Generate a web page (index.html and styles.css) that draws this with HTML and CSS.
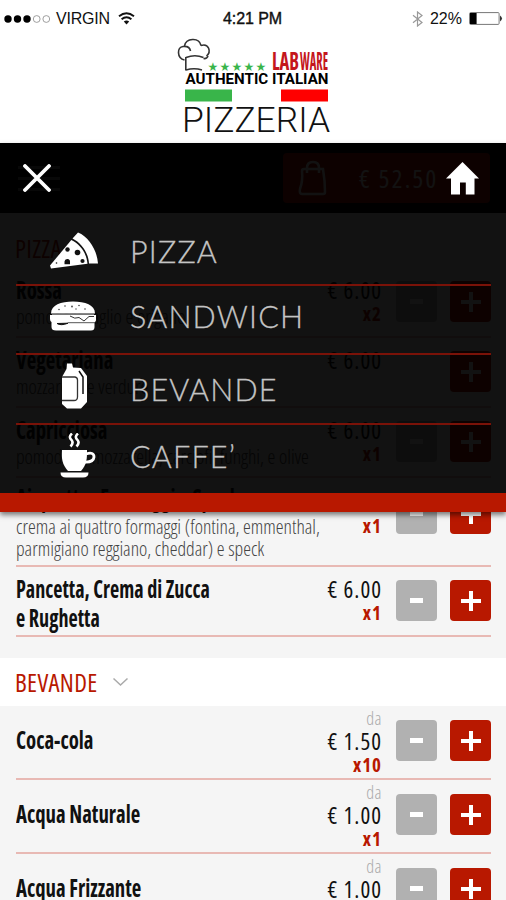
FILE: index.html
```html
<!DOCTYPE html>
<html lang="it">
<head>
    <meta charset="UTF-8">
    <meta name="viewport" content="width=device-width, initial-scale=1.0">
    <title>Labware Pizzeria</title>
    <link rel="stylesheet" href="styles.css">
</head>
<body>
    <div class="app">
        <div class="statusbar">
            <div class="status-left">
                <svg width="46" height="10" viewBox="0 0 46 10">
                    <circle cx="4" cy="5" r="3.7"/>
                    <circle cx="13.5" cy="5" r="3.7"/>
                    <circle cx="23" cy="5" r="3.7"/>
                    <circle cx="32.7" cy="5" r="3.4" fill="none" stroke="#888" stroke-width=".8"/>
                    <circle cx="42.3" cy="5" r="3.4" fill="none" stroke="#888" stroke-width=".8"/>
                </svg>
                <span class="carrier">VIRGIN</span>
                <svg width="17" height="13" viewBox="0 0 17 13" fill="none" stroke="#111" stroke-width="1.9">
                    <path d="M1 4.2Q8.5 -1.8 16 4.2M3.6 7.3Q8.5 3.2 13.4 7.3"/>
                    <path d="M5.8 9.6Q8.5 7.2 11.2 9.6L8.5 12.6Z" fill="#111" stroke="none"/>
                </svg>
            </div>
            <div class="status-time">4:21 PM</div>
            <div class="status-right">
                <svg width="11" height="16" viewBox="0 0 11 16" fill="none" stroke="#999" stroke-width="1.2">
                    <path d="M1 4.3L10 11.5L5.5 15V1L10 4.5L1 11.7"/>
                </svg>
                <span class="percent">22%</span>
                <svg width="34" height="13" viewBox="0 0 34 13">
                    <rect x=".6" y=".6" width="29.5" height="11.8" rx="1" fill="none" stroke="#777"/>
                    <rect x="1" y="1" width="6.6" height="11"/>
                    <path d="M31 3.6Q35 6.5 31 9.4Z" fill="#333"/>
                </svg>
            </div>
        </div>

        <header class="brand">
            <svg width="160" height="100" viewBox="173 37 160 100">
                <g fill="none" stroke="#333" stroke-width="1.6">
                    <path d="M184.500 60C176.500 58 177 47 183 46.500C188 46 190 48 190.500 51M184.500 46C186 38 199 37 201 45.500M201 45.500C209 43 211.500 52 206.500 56M203.500 58.500Q207 59 208 56"/>
                    <path d="M185.800 57V70.500M186 57.500Q195 54 203.500 57.500M186 70Q194 67.500 202 70"/>
                </g>
                <g class="stars">
                    <text x="207.500" y="71">★</text>
                    <text x="219.500" y="71">★</text>
                    <text x="231.500" y="71">★</text>
                    <text x="243.500" y="71">★</text>
                    <text x="255.500" y="71">★</text>
                </g>
                <text class="lab" x="272" y="69.500" textLength="27" lengthAdjust="spacingAndGlyphs">LAB</text>
                <text class="ware" x="300" y="69.500" textLength="28" lengthAdjust="spacingAndGlyphs">WARE</text>
                <text class="authentic" x="185.500" y="84" textLength="143" lengthAdjust="spacingAndGlyphs">AUTHENTIC ITALIAN</text>
                <rect x="185" y="89.500" width="47" height="12" fill="#39b54a"/>
                <rect x="281" y="89.500" width="47" height="12" fill="#f00"/>
                <text class="pizzeria" x="182" y="131.500" textLength="148" lengthAdjust="spacingAndGlyphs">PIZZERIA</text>
            </svg>
        </header>

        <div class="topbar">
            <div class="burger"><i></i><i></i><i></i></div>
            <div class="cart">
                <svg width="30" height="36" viewBox="0 0 30 36" fill="none" stroke="#fff" stroke-width="2.500">
                    <path d="M6 9H25Q27 21 27 32Q27 34 25 34H4Q1 34 2 29Q5 21 4 11Q4 9 6 9Z"/>
                    <path d="M9 13V8Q9 2 15 2Q21 2 21 8V13"/>
                </svg>
                <span class="total">€ 52.50</span>
            </div>
        </div>

        <main class="list">
            <h2 class="section section-first">PIZZA</h2>
            <div class="row">
                <div class="info"><p class="name">Rossa</p><p class="desc">pomodoro, aglio e origano</p></div>
                <div class="price"><span>€ 6.00</span><b>x2</b></div>
                <button class="btn minus"></button><button class="btn plus"></button>
            </div>
            <div class="row">
                <div class="info"><p class="name">Vegetariana</p><p class="desc">mozzarella e verdure</p></div>
                <div class="price"><span>€ 6.00</span></div>
                <button class="btn plus"></button>
            </div>
            <div class="row">
                <div class="info"><p class="name">Capricciosa</p><p class="desc">pomodoro, mozzarella, carciofi, funghi, e olive</p></div>
                <div class="price"><span>€ 6.00</span><b>x1</b></div>
                <button class="btn minus"></button><button class="btn plus"></button>
            </div>
            <div class="row row-long">
                <div class="info">
                    <p class="name">Ai quattro Formaggi e Speck</p>
                    <p class="desc">crema ai quattro formaggi (fontina, emmenthal,<br>parmigiano reggiano, cheddar) e speck</p>
                </div>
                <div class="price"><span>€ 6.00</span><b>x1</b></div>
                <button class="btn minus"></button><button class="btn plus"></button>
            </div>
            <div class="row">
                <div class="info"><p class="name name-wrap">Pancetta, Crema di Zucca<br>e Rughetta</p></div>
                <div class="price"><span>€ 6.00</span><b>x1</b></div>
                <button class="btn minus"></button><button class="btn plus"></button>
            </div>

            <h2 class="section section-drinks">BEVANDE
                <svg width="17" height="10" viewBox="0 0 17 10" fill="none" stroke="#aaa" stroke-width="1.500"><path d="M1.500 1.500L8.500 8L15.500 1.500"/></svg>
            </h2>
            <div class="row drink">
                <div class="info"><p class="name">Coca-cola</p></div>
                <div class="price"><small>da</small><span>€ 1.50</span><b>x10</b></div>
                <button class="btn minus"></button><button class="btn plus"></button>
            </div>
            <div class="row drink">
                <div class="info"><p class="name">Acqua Naturale</p></div>
                <div class="price"><small>da</small><span>€ 1.00</span><b>x1</b></div>
                <button class="btn minus"></button><button class="btn plus"></button>
            </div>
            <div class="row drink">
                <div class="info"><p class="name">Acqua Frizzante</p></div>
                <div class="price"><small>da</small><span>€ 1.00</span></div>
                <button class="btn minus"></button><button class="btn plus"></button>
            </div>
        </main>

        <nav class="menu">
            <div class="menu-head">
                <svg width="28" height="28" viewBox="0 0 28 28" stroke="#fff" stroke-width="3.800" stroke-linecap="round"><path d="M2 2L26 26M26 2L2 26"/></svg>
                <svg width="33" height="33" viewBox="0 0 33 33" fill="#fff"><path d="M16.500 0L33 16.500H28.500V32.500H19.800V20.500H14V32.500H5V16.500H0Z"/></svg>
            </div>
            <a class="item item-pizza">
                <span class="icon">
                    <svg width="50" height="38" viewBox="0 0 50 38">
                        <path d="M29 .5C40 5 48 18 49 31.500L40 31.500C39.500 21 32.500 11 23.500 6.500Z" fill="#fff"/>
                        <path d="M22.300 8C31 12 37.500 21 38.500 31.800L2 36.500L1 33.500Z" fill="#fff"/>
                        <g fill="#111"><circle cx="18.500" cy="17.500" r="2.200"/><circle cx="28.500" cy="20.500" r="2.800"/><path d="M15.500 29.500A2.700 2.700 0 0 1 21 30V32.300H15.500Z"/><circle cx="33.500" cy="29" r="2.100"/><circle cx="7.500" cy="31" r=".8"/></g>
                    </svg>
                </span>PIZZA
            </a>
            <a class="item item-sandwich">
                <span class="icon">
                    <svg width="46" height="30" viewBox="0 0 46 30">
                        <path d="M1 12.500C1 4 11 .5 23 .5S45 4 45 12.500Z" fill="#fff"/>
                        <path d="M0 14H46V19Q46 21.500 42 21.500H4Q0 21.500 0 18Z" fill="#fff"/>
                        <path d="M1.500 21H44.500V26Q44.500 29.500 41 29.500H6Q1.500 29.500 1.500 26Z" fill="#fff"/>
                        <path d="M2 13.500H44" stroke="#777" stroke-width="1.200"/>
                        <path d="M20 15Q25 18.500 29 16.500L34 20L39 15.500H44" fill="none" stroke="#333"/>
                        <path d="M18 21.700H45" stroke="#555"/>
                        <path d="M7 22.500Q11 25 18 22.200Z" fill="#111" stroke="#111"/>
                        <g fill="#444"><circle cx="15" cy="5" r=".8"/><circle cx="22" cy="5.500" r=".9"/><circle cx="29" cy="4.500" r=".8"/><circle cx="9" cy="8.500" r=".8"/><circle cx="26" cy="8" r=".7"/><circle cx="35" cy="8" r=".8"/></g>
                    </svg>
                </span>SANDWICH
            </a>
            <a class="item item-bevande">
                <span class="icon">
                    <svg width="27" height="46" viewBox="0 0 27 46">
                        <path d="M6 .5H11L12 4.500L20 5L26 13V39L20 45.500H6L1 41V14L5.500 6Z" fill="#fff"/>
                        <path d="M1 14H14Q16.500 14.500 16.500 17V34Q16.500 37.500 13 37.500H1" fill="none" stroke="#333" stroke-width="1.300"/>
                        <path d="M18 8L22 14V31" fill="none" stroke="#111" stroke-width="1.500"/>
                    </svg>
                </span>BEVANDE
            </a>
            <a class="item item-caffe">
                <span class="icon">
                    <svg width="36" height="45" viewBox="0 0 36 45">
                        <path d="M2 17H27C27 26 27 31 21 38H8C2 31 1.500 26 2 17Z" fill="#fff"/>
                        <path d="M26 21Q34 18.500 34 24Q33.500 29.500 24.500 29" fill="none" stroke="#fff" stroke-width="2.800"/>
                        <path d="M.5 39.500H28.500Q28.500 44.500 23 44.500H6Q.5 44.500 .5 39.500Z" fill="#fff"/>
                        <path d="M12 .5Q8 4 11.500 7Q14 10 10.500 13.500M18 .5Q14 4 17.500 7Q20 10 16.500 13.500" fill="none" stroke="#fff" stroke-width="2.600"/>
                    </svg>
                </span>CAFFE’
            </a>
        </nav>
    </div>
</body>
</html>
```
FILE: styles.css
```css
* {
    box-sizing: border-box;
}

body {
    margin: 0;
    font-family: "Open Sans", sans-serif;
    font-stretch: 75%;
    background-color: #f5f5f5;
}

p, h2 {
    margin: 0;
}

.app {
    position: relative;
    width: 506px;
    height: 900px;
    overflow: hidden;
}

/* status bar */
.statusbar {
    display: grid;
    grid-template-columns: 1fr auto 1fr;
    align-items: center;
    height: 37px;
    padding: 0 3px 0 4px;
    background-color: #fff;
    color: #111;
    font: 16px "Liberation Sans", sans-serif;
}

.status-left, .status-right {
    display: flex;
    align-items: center;
}

.status-left {
    gap: 6px;
}

.status-right {
    justify-content: flex-end;
    gap: 7px;
}

.carrier {
    width: 56px;
    letter-spacing: -0.2px;
}

.status-time {
    margin-right: 2px;
    letter-spacing: -0.1px;
    -webkit-text-stroke: 0.4px #111;
}

.brand {
    display: flex;
    justify-content: center;
    height: 106px;
    background-color: #fff;
}

.stars {
    fill: #39b54a;
    font: 12px "DejaVu Sans", sans-serif;
}

.lab, .ware {
    fill: #c4161c;
    font: 700 25px "Open Sans", sans-serif;
    font-stretch: 75%;
}

.authentic {
    fill: #000;
    font: 700 14px Roboto, sans-serif;
}

.pizzeria {
    fill: #111;
    font: 300 35px Roboto, sans-serif;
}

/* cart bar */
.topbar {
    display: flex;
    justify-content: space-between;
    align-items: center;
    height: 70px;
    padding: 0 16px 0 18px;
    background-color: #000;
}

.burger {
    display: flex;
    flex-direction: column;
    gap: 8px;
}

.burger i {
    width: 42px;
    height: 3px;
    background-color: #777;
}

.cart {
    display: flex;
    align-items: center;
    width: 207px;
    height: 50px;
    padding-left: 15px;
    gap: 31px;
    background-color: #b81800;
    border-radius: 4px;
    color: #fff;
}

.total {
    font-size: 25px;
    letter-spacing: 2.3px;
}

/* product list */
.section {
    display: flex;
    align-items: center;
    gap: 14px;
    height: 48px;
    padding-left: 15px;
    background-color: #fff;
    color: #b81800;
    font-size: 25px;
    font-weight: 400;
    letter-spacing: 0.3px;
}

.section-first {
    height: 55px;
    padding-top: 14px;
}

.section-drinks {
    margin-top: 21px;
}

.row {
    display: flex;
    align-items: flex-start;
    height: 70px;
    margin: 0 15px 0 16px;
    padding-top: 13px;
    border-bottom: 2px solid #e8b9b4;
}

.row-long {
    height: 89px;
    padding-top: 15px;
}

.info {
    flex: 1;
    margin-top: -6px;
    white-space: nowrap;
}

.name {
    color: #111;
    font-size: 24px;
    font-weight: 700;
    line-height: 29px;
    transform: scaleX(0.865);
    transform-origin: left;
}

.name-wrap {
    transform: scaleX(0.838);
}

.desc {
    padding-top: 2px;
    color: #444;
    font-size: 19.7px;
    font-weight: 300;
    line-height: 22px;
}

.row-long .info {
    margin-top: -10px;
}

.row-long .desc {
    padding-top: 4px;
}

.price {
    display: flex;
    flex-direction: column;
    align-items: flex-end;
    margin: -3px -1px 0 0;
    color: #111;
    font-size: 23px;
    letter-spacing: 1px;
    line-height: 24px;
}

.price b {
    color: #b81800;
    font-size: 19px;
}

.price small {
    color: #aaa;
    font-size: 18px;
    font-weight: 300;
    letter-spacing: 0.5px;
    line-height: 22px;
}

.btn {
    display: flex;
    justify-content: center;
    align-items: center;
    width: 41px;
    height: 41px;
    margin-left: 13px;
    padding: 0;
    border: none;
    border-radius: 4px;
    background-color: #b81800;
}

.price + .btn {
    margin-left: 15px;
}

.price + .plus {
    margin-left: 69px;
}

.minus {
    background-color: #b1b1b1;
}

.minus::before {
    content: "";
    width: 13px;
    height: 5px;
    background-color: #fff;
}

.plus::before {
    content: "";
    width: 20px;
    height: 20px;
    background:
        linear-gradient(#fff, #fff) center / 20px 4px no-repeat,
        linear-gradient(#fff, #fff) center / 4px 20px no-repeat;
}

.drink {
    height: 74px;
    padding-top: 14px;
}

.drink .info {
    margin-top: 5px;
}

.drink .price {
    margin-top: -13px;
}

/* menu opened over the list */
.menu {
    position: absolute;
    top: 143px;
    left: 0;
    width: 506px;
    height: 369px;
    border-bottom: 19px solid #b81800;
    background-color: rgba(0, 0, 0, 0.93);
    background-clip: padding-box;
    box-shadow: 0 3px 5px rgba(0, 0, 0, 0.5);
}

.menu-head {
    display: flex;
    justify-content: space-between;
    align-items: center;
    height: 70px;
    padding: 0 27px 0 23px;
}

.item {
    display: flex;
    align-items: center;
    height: 70px;
    margin: 0 15px 0 16px;
    border-bottom: 2px solid #7a1208;
    color: #c4c4c4;
    font: 300 30.5px Lato, sans-serif;
    letter-spacing: 1.2px;
    -webkit-text-stroke: 0.3px #c4c4c4;
}

.icon {
    display: flex;
    justify-content: center;
    width: 114px;
}

.item-pizza {
    height: 73px;
    padding-top: 5px;
}

.item-pizza .icon {
    padding: 0 0 1px 2px;
}

.item-sandwich {
    height: 69px;
    padding-bottom: 7px;
}

.item-bevande {
    padding-bottom: 1px;
}

.item-bevande .icon {
    padding: 0 0 5px 2px;
}

.item-caffe {
    height: 67px;
    padding-bottom: 5px;
    border-bottom: none;
}

.item-caffe .icon {
    padding: 0 0 1px 10px;
}
```
